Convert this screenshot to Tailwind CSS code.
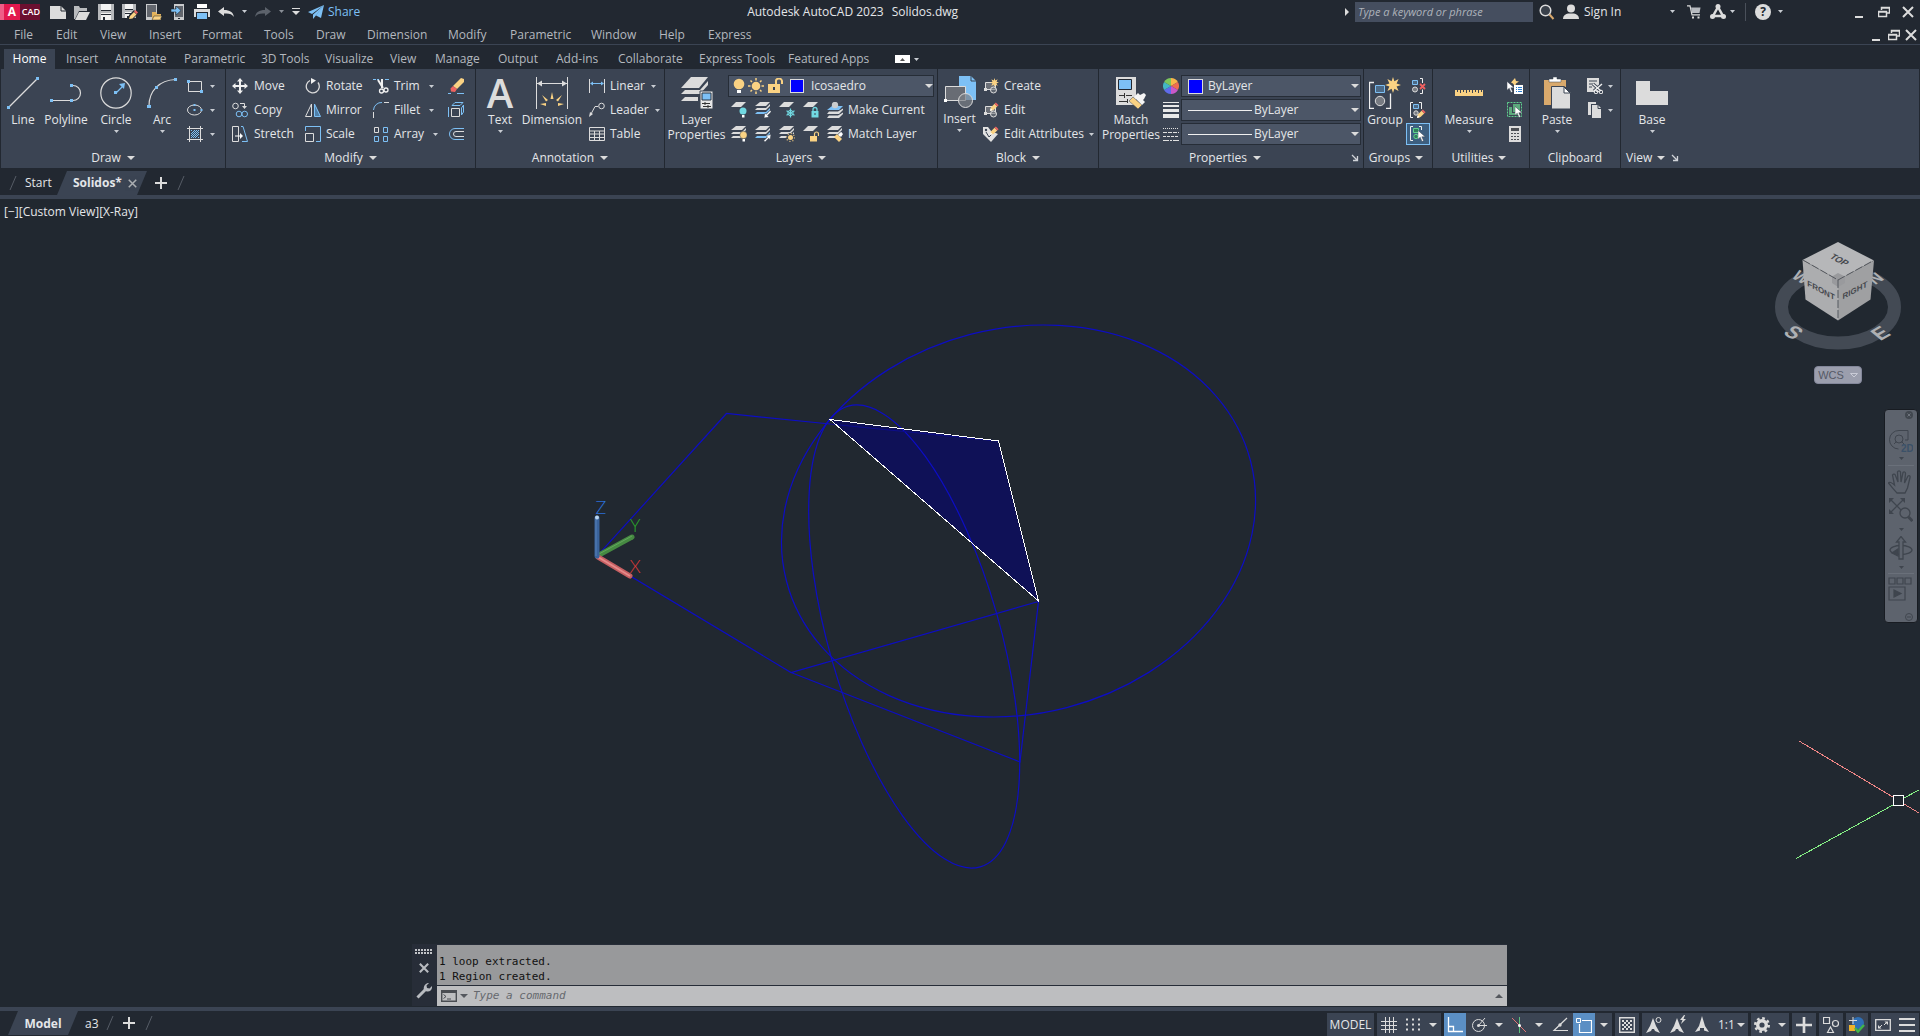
<!DOCTYPE html>
<html lang="en">
<head>
    <meta charset="UTF-8">
    <meta name="viewport" content="width=device-width, initial-scale=1.0">
    <title>Autodesk AutoCAD 2023 - Solidos.dwg</title>
    <script src="https://cdn.jsdelivr.net/npm/@tailwindcss/browser@4"></script>
</head>
<body class="flex h-screen flex-col overflow-hidden bg-[#222831] text-xs text-[#e4e6e9] [font-family:'Open_Sans',sans-serif]">

    <!-- Icon sprite -->
    <svg class="hidden">
        <symbol id="caret" viewBox="0 0 8 4" preserveAspectRatio="none"><path d="M0 0h8L4 4z"/></symbol>
        <symbol id="launch" viewBox="0 0 8 8"><path d="M1 1l5 5M6.500 2v4.500H2" fill="none" stroke="#d0d3d8" stroke-width="1.300"/></symbol>
        <symbol id="plus" viewBox="0 0 12 12"><path d="M6 0v12M0 6h12" stroke="#dcdcdc" stroke-width="2"/></symbol>
        <symbol id="close" viewBox="0 0 12 12"><path d="M1 1l10 10M11 1L1 11" stroke="#dcdcdc" stroke-width="2"/></symbol>
        <symbol id="restore" viewBox="0 0 12 12"><path d="M3.500 4V1.500h8V7H9M.5 5.500h8v5h-8zM3 2h9M0 6h9" fill="none" stroke="#dcdcdc" stroke-width="1.500"/></symbol>
        <symbol id="sheet" viewBox="0 0 16 16"><path d="M5 1h11l-5 6H0z" fill="#dcdcdc"/></symbol>
        <symbol id="sheets" viewBox="0 0 16 16"><path d="M5 0h10l-4 4H0z" fill="#dcdcdc"/><path d="M2 6h9l4-4v2l-4 4H0zM2 10h9l4-4v2l-4 4H0z" fill="#dcdcdc"/></symbol>
        <symbol id="sheetsblue" viewBox="0 0 16 16"><path d="M5 0h10l-4 4H0z" fill="#dcdcdc"/><path d="M2 6h9l4-4v2l-4 4H0z" fill="#dcdcdc"/><path d="M2 10h9l4-4v2l-4 4H0z" fill="#7dc0f5"/></symbol>
        <symbol id="pencil" viewBox="0 0 10 10"><path d="M0 10l1-4 4-4 3 3-4 4z" fill="#fad283"/><path d="M5 2l1.500-1.500 3 3L8 5z" fill="#ee6461"/><path d="M0 10l.7-3L3 9.300z" fill="#fff"/></symbol>
        <symbol id="cursor" viewBox="0 0 10 14"><path d="M0 0v11l2.800-2.500L5 14l2-1-2.200-5H9z" fill="#fff" stroke="#3b4453" stroke-width=".6"/></symbol>
        <symbol id="burst" viewBox="0 0 16 16"><path d="M8 0l1.400 4.300L13.600 2l-2 4.500L16 8l-4.400 1.500 2 4.500-4.200-2.300L8 16l-1.400-4.300L2.400 14l2-4.500L0 8l4.400-1.500-2-4.500 4.200 2.300z" fill="#fad283"/></symbol>
        <symbol id="blockshape" viewBox="0 0 16 16"><path d="M2.500 4.500h10v7h-10z" fill="#6c7078" stroke="#dcdcdc"/><circle cx="10.500" cy="12" r="3" fill="#777b82" fill-opacity=".6" stroke="#dcdcdc"/><path d="M1 10h3v3H1z" fill="#dcdcdc"/></symbol>

        <symbol id="new" viewBox="0 0 16 16"><path d="M0 2h11l5 5v8H0z" fill="#dcdcdc"/><path d="M11 2v5h5" fill="none" stroke="#222831"/></symbol>
        <symbol id="open" viewBox="0 0 16 16"><path d="M0 2h5l1 2h7v3H5L1 15H0z" fill="#b9bbbe"/><path d="M5 8h11l-4 8H1z" fill="#dcdcdc"/></symbol>
        <symbol id="save" viewBox="0 0 16 16"><path d="M0 0h16v16H0z" fill="#b6b8bb"/><path d="M3 0h10v6H3zM3 9h10v7H3z" fill="#f2f2f2"/><path d="M3 6h10v1H3zM3 10h10v1H3zM5 13h2v3H5z" fill="#222831"/></symbol>
        <symbol id="saveas" viewBox="0 0 16 16"><path d="M0 0h14v14H0z" fill="#b6b8bb"/><path d="M3 0h8v5H3zM3 8h8v6H3z" fill="#f2f2f2"/><path d="M3 5h8v1H3zM3 9h8v1H3zM5 12h2v2H5z" fill="#222831"/><path d="M6 16l1-5 5-5 4 4-5 5z" fill="#222831"/><path d="M7 15l1-3 4-4 2.500 2.500-4 4z" fill="#fad283"/><path d="M12 7.500L13.500 6 16 8.500 14.500 10z" fill="#ee6461"/></symbol>
        <symbol id="openweb" viewBox="0 0 16 16"><path d="M0 0h11v16H0z" fill="#c9cbcd"/><path d="M1 1h9v12H1z" fill="#62666d"/><path d="M6 8h4l1 2h4v6H6z" fill="#e3b35c"/><path d="M8 12h8l-2 4H6z" fill="#fad283" stroke="#222831" stroke-width=".5"/></symbol>
        <symbol id="saveweb" viewBox="0 0 16 16"><path d="M4 0h10v16H4z" fill="#c9cbcd"/><path d="M5 2h8v11H5z" fill="#62666d"/><path d="M1 5h5V2l5 4.500L6 11V8H1z" fill="#7dc0f5" stroke="#222831" stroke-width=".6"/><path d="M8 14h2v1H8z" fill="#222831"/></symbol>
        <symbol id="print" viewBox="0 0 16 16"><path d="M3 0h10v4H3z" fill="#fff"/><path d="M0 5h16v8H0z" fill="#dcdcdc"/><path d="M2 8h12v8H2z" fill="#222831"/><path d="M3 9h10v6H3z" fill="#7dc0f5"/></symbol>
        <symbol id="undo" viewBox="0 0 16 10"><path d="M0 4.500L6 0v3c6 0 9 2 10 7-2-3-5-4-10-3.500V9z"/></symbol>
        <symbol id="send" viewBox="0 0 16 14"><path d="M16 0L0 7l4 2zM16 0L5 9.500V14l2.500-3zM16 0L8 10.500l5 2.500z" fill="#7dc0f5"/></symbol>

        <symbol id="line" viewBox="0 0 32 32"><path d="M2 30L30 2" stroke="#dcdcdc" stroke-width="1.200"/><path d="M0 29h3v3H0zM29 0h3v3h-3z" fill="#7dc0f5"/></symbol>
        <symbol id="polyline" viewBox="0 0 32 32"><path d="M3 23.500h17M22 8.500h1a7.500 7.500 0 0 1 0 15h-2" fill="none" stroke="#dcdcdc" stroke-width="1.200"/><path d="M0 22h3v3H0zM20 22h3v3h-3zM20 7h3v3h-3z" fill="#7dc0f5"/></symbol>
        <symbol id="circle" viewBox="0 0 32 32"><circle cx="16" cy="16" r="15.200" fill="none" stroke="#dcdcdc" stroke-width="1.200"/><path d="M16 16l7-7" stroke="#7dc0f5" stroke-width="1.300"/><path d="M25 6l-1 6-5-5zM14 14h3v3h-3z" fill="#7dc0f5"/></symbol>
        <symbol id="arc" viewBox="0 0 32 32"><path d="M3 29C3 14 13 3 30 2.500" fill="none" stroke="#dcdcdc" stroke-width="1.200"/><path d="M1 28h4v3H1zM9 9h3v3H9zM28 1h3v3h-3z" fill="#7dc0f5"/></symbol>
        <symbol id="rect" viewBox="0 0 16 16"><path d="M1.500 3.500h13v10h-13z" fill="none" stroke="#dcdcdc"/><path d="M0 2h3v3H0zM13 12h3v3h-3z" fill="#7dc0f5"/></symbol>
        <symbol id="ellipse" viewBox="0 0 16 16"><ellipse cx="7.500" cy="8" rx="7" ry="5" fill="none" stroke="#dcdcdc"/><path d="M6.500 2h2v2h-2zM6.500 7h2v2h-2zM13.500 7h2v2h-2z" fill="#7dc0f5"/></symbol>
        <symbol id="hatch" viewBox="0 0 16 16"><path d="M2.500 0v16M13.500 0v16M0 2.500h16M0 13.500h16" stroke="#dcdcdc"/><path d="M4 8l4-4M4 12l8-8M8 12l4-4M4 5l1-1M11 12l1-1M4 10l6-6M6 12l6-6" stroke="#7dc0f5"/></symbol>

        <symbol id="move" viewBox="0 0 16 16"><path d="M8 0l3 3.500H9V7h3.500V5L16 8l-3.500 3V9H9v3.500h2L8 16l-3-3.500h2V9H3.500v2L0 8l3.500-3v2H7V3.500H5z" fill="#f0f0f0"/></symbol>
        <symbol id="copy" viewBox="0 0 16 16"><circle cx="3.500" cy="4" r="2.800" fill="none" stroke="#dcdcdc"/><path d="M8 1.500h4.500V5" fill="none" stroke="#dcdcdc"/><path d="M10 4h5l-2.500 3z" fill="#dcdcdc"/><circle cx="7" cy="12" r="2.800" fill="none" stroke="#7dc0f5"/><circle cx="12.700" cy="12" r="2.800" fill="none" stroke="#7dc0f5"/></symbol>
        <symbol id="stretch" viewBox="0 0 16 16"><path d="M.5.500h6v15h-6z" fill="none" stroke="#dcdcdc"/><path d="M9 .5h2l4.500 15H10" fill="none" stroke="#7dc0f5"/><path d="M3 10h5" stroke="#fff"/><path d="M8 7l3 3-3 3z" fill="#fff"/></symbol>
        <symbol id="rotate" viewBox="0 0 16 16"><path d="M5 2.500a6.500 6.500 0 1 0 8 2" fill="none" stroke="#dcdcdc" stroke-width="1.300"/><path d="M6 0l5 2.500L6 6z" fill="#f0f0f0"/></symbol>
        <symbol id="mirror" viewBox="0 0 16 16"><path d="M6.500 2v12.500h-6z" fill="none" stroke="#dcdcdc"/><path d="M9.500 2v12.500h6z" fill="#4f7fa8" stroke="#7dc0f5"/></symbol>
        <symbol id="scale" viewBox="0 0 16 16"><path d="M.5 5V.500h15v15H11" fill="none" stroke="#7dc0f5"/><path d="M.5 7.500h8v8h-8z" fill="none" stroke="#dcdcdc"/></symbol>
        <symbol id="trim" viewBox="0 0 16 16"><path d="M0 1.500h3M4 1.500h2M12 1.500h4" stroke="#7dc0f5"/><path d="M5 2l5 8M9 1v9" stroke="#f0f0f0" stroke-width="2"/><circle cx="8.500" cy="13" r="2" fill="none" stroke="#f0f0f0" stroke-width="1.300"/><circle cx="13" cy="12" r="2" fill="none" stroke="#f0f0f0" stroke-width="1.300"/></symbol>
        <symbol id="fillet" viewBox="0 0 16 16"><path d="M.5 16v-6M11 .500h5" stroke="#dcdcdc"/><path d="M.5 8A8 8 0 0 1 9 .500" fill="none" stroke="#7dc0f5"/></symbol>
        <symbol id="array" viewBox="0 0 16 16"><path d="M1.500 1.500h4v5h-4z" fill="none" stroke="#dcdcdc"/><path d="M10.500 1.500h4v5h-4zM1.500 10.500h4v5h-4zM10.500 10.500h4v5h-4z" fill="none" stroke="#7dc0f5"/></symbol>
        <symbol id="erase" viewBox="0 0 16 16"><path d="M5 8l8-8 3 1v3l-7 7z" fill="#fad283"/><path d="M5 8l4 3-2 3-4-.5-.5-3z" fill="#ee6461"/><path d="M0 15.500h3M9 15.500h7" stroke="#7dc0f5"/></symbol>
        <symbol id="explode" viewBox="0 0 16 16"><path d="M3.500 6.500h8v8h-8z" fill="none" stroke="#dcdcdc"/><path d="M.5 5v10M4 3.500L7 .500h8L12 3.500zM13.500 6l2-3v7l-2 3z" fill="none" stroke="#7dc0f5"/></symbol>
        <symbol id="offset" viewBox="0 0 16 16"><path d="M16 2.500H7a5.500 5.500 0 0 0 0 11h9" fill="none" stroke="#7dc0f5"/><path d="M16 5.500H8a2.500 2.500 0 0 0 0 5h8" fill="none" stroke="#dcdcdc"/></symbol>

        <symbol id="dimension" viewBox="0 0 32 32"><path d="M.5 0v32M31.500 0v32M1 6.500h30" stroke="#dcdcdc"/><path d="M1 6.500l5-3v6zM31 6.500l-5-3v6z" fill="#dcdcdc"/><path d="M16 15l1.500 7h-3zM6 18l6 5-2 1.500zM26 18l-6 5 2 1.500zM4 27l6-1v3zM28 27l-6-1v3z" fill="#fad283"/></symbol>
        <symbol id="linear" viewBox="0 0 16 16"><path d="M.5 1v14M15.500 1v14" stroke="#dcdcdc"/><path d="M2 5.500h12" stroke="#7dc0f5"/><path d="M1 5.500l3-2v4zM15 5.500l-3-2v4z" fill="#7dc0f5"/></symbol>
        <symbol id="leader" viewBox="0 0 16 16"><circle cx="12.500" cy="4" r="2.800" fill="none" stroke="#dcdcdc"/><path d="M9 4.500H6L2 12" fill="none" stroke="#dcdcdc"/><path d="M0 15l1-5 3 2z" fill="#dcdcdc"/></symbol>
        <symbol id="table" viewBox="0 0 16 16"><path d="M.5 1.500h15v13H.500zM0 5h16M0 8h16M0 11.500h16M5.500 5v9M10.500 5v9" fill="none" stroke="#dcdcdc"/></symbol>

        <symbol id="layerprops" viewBox="0 0 32 32"><path d="M10 0h17l-9 11H0z" fill="#dcdcdc"/><path d="M4 13h15l8-9v4l-8 9H0zM4 20h13v4H0z" fill="#dcdcdc"/><path d="M19 14h13v18H19z" fill="#e6e6e6" stroke="#3b4453"/><path d="M21 16h9v7h-9z" fill="#7dc0f5" stroke="#2a3440"/><path d="M21 26.500h8M22 29.500h8M24 25v3M27 28v3" stroke="#333"/></symbol>
        <symbol id="bulb" viewBox="0 0 12 16"><circle cx="6" cy="6" r="5.300" fill="#fad283"/><path d="M4 12h4v3H4z" fill="#fff"/></symbol>
        <symbol id="sun" viewBox="0 0 16 16"><circle cx="8" cy="8" r="4.300" fill="#fad283"/><path d="M8 0v2.500M8 13.500V16M0 8h2.500M13.500 8H16M2.500 2.500L4 4M12 12l1.500 1.500M13.500 2.500L12 4M4 12l-1.500 1.500" stroke="#fad283" stroke-width="1.500"/></symbol>
        <symbol id="unlock" viewBox="0 0 16 16"><path d="M9 7V4a3 3 0 0 1 6-1v3" fill="none" stroke="#fad283" stroke-width="2"/><path d="M1 6h12v9H1z" fill="#fad283"/><path d="M6 9h2v3H6z" fill="#3b4453"/></symbol>
        <symbol id="l-off" viewBox="0 0 16 16"><path d="M5 0h10l-5 5H0z" fill="#dcdcdc"/><circle cx="12" cy="9" r="3.500" fill="#71d9e2"/><path d="M11 13h2.500v2.500H11z" fill="#fff"/></symbol>
        <symbol id="l-iso" viewBox="0 0 16 16"><use href="#sheetsblue"/><path d="M9 16l1-5 1.300 1.300L15 8.500l1.200 1.200-3.700 3.700L14 15z" fill="#fff" stroke="#3b4453" stroke-width=".5"/></symbol>
        <symbol id="l-frz" viewBox="0 0 16 16"><path d="M5 0h10l-5 5H0z" fill="#dcdcdc"/><path d="M11.500 6.500v9M7.500 8.800l8 4.400M15.500 8.800l-8 4.400" stroke="#71d9e2" stroke-width="1.200"/><circle cx="11.500" cy="11" r="2.700" fill="none" stroke="#71d9e2"/></symbol>
        <symbol id="l-lock" viewBox="0 0 16 16"><path d="M5 0h10l-5 5H0z" fill="#dcdcdc"/><path d="M8.500 9h7v6.500h-7z" fill="#71d9e2"/><path d="M10 9V7.500a2 2 0 0 1 4 0V9" fill="none" stroke="#71d9e2" stroke-width="1.300"/><path d="M11.500 11h1v2h-1z" fill="#3b4453"/></symbol>
        <symbol id="l-cur" viewBox="0 0 16 16"><path d="M5 4h11l-4 4H0z" fill="#7dc0f5"/><path d="M2 9.500h9l5-3v1.500l-4 4H0zM2 13.500h9l5-3V12l-4 4H0z" fill="#dcdcdc"/><circle cx="8" cy="3" r="3.200" fill="#c9cbcd"/></symbol>
        <symbol id="l-on" viewBox="0 0 16 16"><use href="#sheets"/><circle cx="12.500" cy="9" r="3.700" fill="#fad283" stroke="#3b4453" stroke-width=".5"/><path d="M11.500 13H14v2.500h-2.500z" fill="#fff"/></symbol>
        <symbol id="l-uniso" viewBox="0 0 16 16"><use href="#sheetsblue"/><path d="M16 8.500l-1 5-1.300-1.300L10 16l-1.200-1.200L12.500 11 11 9.500z" fill="#fff" stroke="#3b4453" stroke-width=".5"/></symbol>
        <symbol id="l-thaw" viewBox="0 0 16 16"><use href="#sheets"/><circle cx="11.500" cy="11.500" r="4.600" fill="#3b4453"/><circle cx="11.500" cy="11.500" r="2.500" fill="#fad283"/><circle cx="11.500" cy="11.500" r="4" fill="none" stroke="#fad283" stroke-width="1.200" stroke-dasharray="1 2.100"/></symbol>
        <symbol id="l-unlock" viewBox="0 0 16 16"><path d="M5 0h10l-5 5H0z" fill="#dcdcdc"/><path d="M7 10h7v5.500H7z" fill="#fad283"/><path d="M11.500 10V8a2 2 0 0 1 4 0v2" fill="none" stroke="#fad283" stroke-width="1.200"/></symbol>
        <symbol id="l-match" viewBox="0 0 16 16"><use href="#sheets"/><path d="M7 11l3-3 5 5-3 3z" fill="#fad283"/><path d="M11 8.500L14 6l2 2-2 3z" fill="#fff"/></symbol>

        <symbol id="insert" viewBox="0 0 32 32"><path d="M15 0h12l5 5v19H15z" fill="#7dc0f5"/><path d="M27 0v5h5" fill="none" stroke="#3b4453"/><path d="M1.500 10.500h20v14h-20z" fill="#686c74" stroke="#dcdcdc"/><circle cx="21.500" cy="24.500" r="7" fill="#7c8087" fill-opacity=".7" stroke="#dcdcdc"/><path d="M0 23h3v3H0z" fill="#fff"/></symbol>
        <symbol id="b-create" viewBox="0 0 16 16"><use href="#blockshape"/><use href="#burst" x="7" y="0" width="9" height="9"/></symbol>
        <symbol id="b-edit" viewBox="0 0 16 16"><use href="#blockshape"/><use href="#pencil" x="7" y="0" width="9" height="9"/></symbol>
        <symbol id="b-attr" viewBox="0 0 16 16"><path d="M0 1h5l3 4 7 3-7 8-8-8z" fill="#e2e2e2"/><path d="M3 6l3 5 4-4" fill="none" stroke="#3b4453"/><circle cx="3" cy="4" r="1.200" fill="#3b4453"/><use href="#pencil" x="7" y="0" width="9" height="9"/></symbol>

        <symbol id="matchprops" viewBox="0 0 32 32"><path d="M1 0h20v28H1z" fill="#dcdcdc"/><path d="M3.500 2.500h13v10h-13z" fill="#7dc0f5" stroke="#222831"/><path d="M4 18.500h5M11 18.500h6M9.500 16v5M4 24.500h9M12.500 22v4" stroke="#333"/><path d="M14 24l4-4 9 8-4 4z" fill="#fad283" stroke="#3b4453" stroke-width=".5"/><path d="M19 20l4-4 2 2 4-2 2 2-2 4-1 1 2 2-3 3z" fill="#f5f5f5"/></symbol>
        <symbol id="wheel" viewBox="0 0 16 16"><path d="M8 8V0a8 8 0 0 1 6.900 4z" fill="#f7b64a"/><path d="M8 8l6.900-4a8 8 0 0 1 0 8z" fill="#ee6d50"/><path d="M8 8l6.900 4A8 8 0 0 1 8 16z" fill="#c958c9"/><path d="M8 8v8a8 8 0 0 1-6.900-4z" fill="#5f6bea"/><path d="M8 8l-6.900 4a8 8 0 0 1 0-8z" fill="#43b8c4"/><path d="M8 8L1.100 4A8 8 0 0 1 8 0z" fill="#7cc75c"/></symbol>
        <symbol id="weights" viewBox="0 0 16 16"><path d="M0 0h16v1H0zM0 3h16v2H0zM0 7h16v3H0zM0 12h16v4H0z" fill="#e8e8e8"/></symbol>
        <symbol id="ltypes" viewBox="0 0 16 16"><path d="M0 2.500h16" stroke="#e0e0e0" stroke-dasharray="1 1"/><path d="M0 6.500h16" stroke="#e0e0e0" stroke-dasharray="4 1"/><path d="M0 10.500h16" stroke="#e0e0e0" stroke-dasharray="3 1"/><path d="M0 14.500h16" stroke="#e0e0e0" stroke-dasharray="6 1 2 1"/></symbol>

        <symbol id="group" viewBox="0 0 32 32"><path d="M5 5.500H.5v26H5M17 31.500h4.500v-15" fill="none" stroke="#f0f0f0" stroke-width="1.300"/><path d="M6.500 8.500h9v7h-9z" fill="#4d6a86" stroke="#7dc0f5"/><circle cx="11" cy="24" r="4.700" fill="#777b82" stroke="#dcdcdc"/><use href="#burst" x="16" y="0" width="16" height="16"/></symbol>
        <symbol id="ungroup" viewBox="0 0 16 16"><path d="M10 .500h2.500V5M10 15.500h2.500v-4" fill="none" stroke="#f0f0f0"/><path d="M2.500 2.500h5v4h-5z" fill="#4d6a86" stroke="#7dc0f5"/><circle cx="5" cy="11.500" r="2.500" fill="#777b82" stroke="#dcdcdc"/><path d="M10 6l5 5M15 6l-5 5" stroke="#f06060" stroke-width="1.800"/></symbol>
        <symbol id="groupedit" viewBox="0 0 16 16"><path d="M3 .500H.5v15H3M9 .500h2.500V7" fill="none" stroke="#f0f0f0"/><path d="M3.500 2.500h5v4h-5z" fill="#4d6a86" stroke="#7dc0f5"/><circle cx="6" cy="11" r="2.200" fill="#777b82" stroke="#dcdcdc"/><use href="#pencil" x="7" y="7" width="9" height="9"/></symbol>
        <symbol id="groupsel" viewBox="0 0 16 16"><path d="M3 .500H.5v14H3M9 .500h2.500V4" fill="none" stroke="#f0f0f0"/><path d="M3.500 2.500h5v4h-5z" fill="#2f7f5c" stroke="#5fd08e"/><circle cx="6" cy="10.500" r="2.200" fill="#2f7f5c" stroke="#5fd08e"/><use href="#cursor" x="8" y="4" width="8" height="12"/></symbol>

        <symbol id="measure" viewBox="0 0 32 32"><path d="M2 13h28v6H2z" fill="#fad283"/><path d="M4.500 13v2M7.500 13v3M10.500 13v2M13.500 13v3M16.500 13v2M19.500 13v3M22.500 13v2M25.500 13v3M28.500 13v2" stroke="#3b4453"/></symbol>
        <symbol id="quickselect" viewBox="0 0 16 16"><path d="M8 0l1 3 3 .5-3 2-1 3-2-3-2-1z" fill="#fad283"/><use href="#cursor" x="0" y="3" width="8" height="12"/><path d="M7 7h9v9H7z" fill="#fff"/><path d="M9 9.500h1M9 11.500h1M9 13.500h1M11 9.500h4M11 11.500h4M11 13.500h4" stroke="#2d7fd0"/></symbol>
        <symbol id="selectall" viewBox="0 0 16 16"><path d="M.5.500h14v14H.500z" fill="none" stroke="#5fd08e" stroke-dasharray="2 1"/><path d="M2 5h3v6h6v2H2zM6 2h7v8H6z" fill="#5ca97c"/><use href="#cursor" x="8" y="4" width="8" height="12"/></symbol>
        <symbol id="calc" viewBox="0 0 16 16"><path d="M2 0h12v16H2z" fill="#dcdcdc"/><path d="M4 2h8v3H4zM4 7h2v1H4zM7 7h2v1H7zM10 7h2v1h-2zM4 10h2v1H4zM7 10h2v1H7zM10 10h2v1h-2zM4 13h2v1H4zM7 13h2v1H7zM10 13h2v1h-2z" fill="#4c4f55"/></symbol>
        <symbol id="paste" viewBox="0 0 32 32"><path d="M3 3h22v25H3z" fill="#d9a96c"/><path d="M8 2h4V0h4v2h4v3H8z" fill="#fff" stroke="#3b4453" stroke-width=".5"/><path d="M10.500 9.500h13l6 6V32h-19z" fill="#dcdcdc" stroke="#3b4453"/><path d="M23 10v6h6z" fill="#fff" stroke="#3b4453"/></symbol>
        <symbol id="cut" viewBox="0 0 16 16"><path d="M0 0h12v14H0z" fill="#dcdcdc"/><path d="M2 3h8M2 6h4M2 9h3" stroke="#3b4453"/><path d="M6 6l8 7M15 6l-8 7" stroke="#3b4453" stroke-width="3"/><path d="M6 6l8 7M15 6l-8 7" stroke="#f0f0f0" stroke-width="1.400"/><circle cx="9" cy="14" r="1.800" fill="none" stroke="#f0f0f0"/><circle cx="14" cy="14" r="1.800" fill="none" stroke="#f0f0f0"/></symbol>
        <symbol id="copyclip" viewBox="0 0 16 16"><path d="M1 0h8v2H4v11H1z" fill="#dcdcdc"/><path d="M5 3h6l3 3v10H5z" fill="#dcdcdc"/><path d="M11 3v3.500h3" fill="none" stroke="#3b4453"/></symbol>
        <symbol id="base" viewBox="0 0 32 32"><path d="M0 4h14v10h18v14H0z" fill="#dcdcdc"/></symbol>

        <symbol id="north" viewBox="0 0 16 20"><path d="M8 1l3 10 4 6-5-1.500V13H6v2.500L1 17l4-6z" fill="#dcdcdc"/></symbol>
    </svg>

    <!-- Title bar -->
    <header class="flex h-[22px] shrink-0 items-center pt-px">
        <div class="flex h-4 w-10 shrink-0 items-center bg-[#6b1030] text-[9px] font-semibold text-white">
            <span class="flex h-4 w-5 items-center justify-center border-l-4 border-[#ef5d87] bg-[#e2184e] text-xs font-bold">A</span>
            <span class="pl-[2px]">CAD</span>
        </div>
        <div class="flex items-center gap-2 pl-[10px]">
            <button aria-label="New"><svg class="size-4"><use href="#new"/></svg></button>
            <button aria-label="Open"><svg class="size-4"><use href="#open"/></svg></button>
            <button aria-label="Save"><svg class="size-4"><use href="#save"/></svg></button>
            <button aria-label="Save As"><svg class="size-4"><use href="#saveas"/></svg></button>
            <button aria-label="Open from Web"><svg class="size-4"><use href="#openweb"/></svg></button>
            <button aria-label="Save to Web"><svg class="size-4"><use href="#saveweb"/></svg></button>
            <button aria-label="Plot"><svg class="size-4"><use href="#print"/></svg></button>
            <button aria-label="Undo"><svg class="h-[10px] w-4 fill-[#dcdcdc]"><use href="#undo"/></svg></button>
            <button aria-label="Undo list"><svg class="h-[3px] w-[5px] fill-[#c9cdd3]"><use href="#caret"/></svg></button>
            <button aria-label="Redo" class="-scale-x-100"><svg class="h-[10px] w-4 fill-[#5c626b]"><use href="#undo"/></svg></button>
            <button aria-label="Redo list"><svg class="h-[3px] w-[5px] fill-[#8a8f97]"><use href="#caret"/></svg></button>
            <button aria-label="Customize" class="flex flex-col gap-[2px]"><span class="h-px w-2 bg-[#dcdcdc]"></span><svg class="h-1 w-2 fill-[#dcdcdc]"><use href="#caret"/></svg></button>
            <button class="flex items-center gap-1 text-[#7dc0f5]"><svg class="h-[14px] w-4"><use href="#send"/></svg>Share</button>
        </div>
        <h1 class="flex flex-1 justify-center gap-2 whitespace-nowrap"><span>Autodesk AutoCAD 2023</span><span>Solidos.dwg</span></h1>
        <div class="flex items-center">
            <svg class="mr-[6px] h-2 w-1 fill-[#dcdcdc]" viewBox="0 0 4 8"><path d="M0 0l4 4-4 4z"/></svg>
            <input type="text" aria-label="Search" placeholder="Type a keyword or phrase" class="h-5 w-[178px] bg-[#454e5f] px-[3px] text-[11px] italic placeholder:text-[#aeb3bb]">
            <button aria-label="Find" class="ml-[6px]"><svg class="size-4" viewBox="0 0 16 16"><circle cx="6.500" cy="6.500" r="5.300" fill="#3a414b" stroke="#dcdcdc" stroke-width="1.500"/><path d="M10.500 10.500l4 4.500" stroke="#d9a96c" stroke-width="2"/></svg></button>
            <button class="ml-2 flex w-[101px] items-center gap-[5px] whitespace-nowrap"><svg class="size-4" viewBox="0 0 16 16"><circle cx="8" cy="4.500" r="4" fill="#dcdcdc"/><path d="M0 15c0-4 3-5 5-5.500h6c2 .5 5 1.500 5 5.500z" fill="#dcdcdc"/></svg>Sign In</button>
            <button aria-label="Account menu" class="ml-[6px]"><svg class="h-[3px] w-[5px] fill-[#c9cdd3]"><use href="#caret"/></svg></button>
            <button aria-label="App Store" class="ml-3"><svg class="size-[14px]" viewBox="0 0 14 14"><path d="M0 .800h3l2 9h8" fill="none" stroke="#dcdcdc" stroke-width="1.200"/><path d="M4 2.500h9.500l-1 5.500H5z" fill="#b7babf"/><path d="M5 11.500h2v2H5zM10.500 11.500h2v2h-2z" fill="#dcdcdc"/></svg></button>
            <button aria-label="Stay connected" class="ml-[9px]"><svg class="size-4" viewBox="0 0 16 16"><path d="M8 3L3 12h10z" fill="none" stroke="#dcdcdc" stroke-width="2.500"/><circle cx="8" cy="2.500" r="2.500" fill="#dcdcdc"/><circle cx="2.500" cy="12.500" r="2.500" fill="#dcdcdc"/><circle cx="13.500" cy="12.500" r="2.500" fill="#dcdcdc"/></svg></button>
            <button aria-label="Connect menu" class="ml-1"><svg class="h-[3px] w-[5px] fill-[#c9cdd3]"><use href="#caret"/></svg></button>
            <span class="ml-[10px] h-[18px] w-px bg-[#4a505a]"></span>
            <button aria-label="Help" class="ml-[9px] flex size-4 items-center justify-center rounded-full bg-[#dcdcdc] font-bold text-[#222831]">?</button>
            <button aria-label="Help menu" class="ml-[7px]"><svg class="h-[3px] w-[5px] fill-[#c9cdd3]"><use href="#caret"/></svg></button>
            <button aria-label="Minimize" class="ml-[72px] flex h-3 w-2 items-end"><span class="h-[2px] w-2 bg-[#dcdcdc]"></span></button>
            <button aria-label="Restore" class="ml-[15px]"><svg class="size-3"><use href="#restore"/></svg></button>
            <button aria-label="Close" class="mr-[6px] ml-3"><svg class="size-3"><use href="#close"/></svg></button>
        </div>
    </header>

    <!-- Menu bar -->
    <div class="flex h-[23px] shrink-0 items-center justify-between border-b border-[#3b4453] pt-[3px] pr-[3px] pl-[14px] text-[#b4b8bf]">
        <nav class="grid grid-cols-[42px_44px_49px_53px_62px_52px_51px_81px_62px_81px_68px_49px_60px] text-left">
            <button class="text-left">File</button>
            <button class="text-left">Edit</button>
            <button class="text-left">View</button>
            <button class="text-left">Insert</button>
            <button class="text-left">Format</button>
            <button class="text-left">Tools</button>
            <button class="text-left">Draw</button>
            <button class="text-left">Dimension</button>
            <button class="text-left">Modify</button>
            <button class="text-left">Parametric</button>
            <button class="text-left">Window</button>
            <button class="text-left">Help</button>
            <button class="text-left">Express</button>
        </nav>
        <div class="flex items-center">
            <button aria-label="Minimize drawing" class="flex h-3 w-2 items-end"><span class="h-[2px] w-2 bg-[#dcdcdc]"></span></button>
            <button aria-label="Restore drawing" class="ml-2"><svg class="size-3"><use href="#restore"/></svg></button>
            <button aria-label="Close drawing" class="ml-[5px]"><svg class="size-3"><use href="#close"/></svg></button>
        </div>
    </div>

    <!-- Ribbon tabs -->
    <nav class="mt-1 grid h-5 shrink-0 grid-cols-[51px_49px_69px_77px_64px_65px_45px_63px_58px_62px_81px_89px_98px_60px] items-stretch justify-start pl-1 whitespace-nowrap text-[#b4b8bf]">
        <button class="bg-[#3b4453] text-white">Home</button>
        <button class="pl-[11px] text-left">Insert</button>
        <button class="pl-[11px] text-left">Annotate</button>
        <button class="pl-[11px] text-left">Parametric</button>
        <button class="pl-[11px] text-left">3D Tools</button>
        <button class="pl-[11px] text-left">Visualize</button>
        <button class="pl-[11px] text-left">View</button>
        <button class="pl-[11px] text-left">Manage</button>
        <button class="pl-[11px] text-left">Output</button>
        <button class="pl-[11px] text-left">Add-ins</button>
        <button class="pl-[11px] text-left">Collaborate</button>
        <button class="pl-[11px] text-left">Express Tools</button>
        <button class="pl-[11px] text-left">Featured Apps</button>
        <button aria-label="Minimize ribbon" class="flex items-center gap-1 pl-5"><span class="flex h-2 w-[15px] items-center justify-center bg-white"><svg class="h-[3px] w-[5px] rotate-180 fill-[#555]"><use href="#caret"/></svg></span><svg class="h-[3px] w-[5px] fill-[#c9cdd3]"><use href="#caret"/></svg></button>
    </nav>

    <!-- Ribbon -->
    <div class="mx-px flex h-[99px] shrink-0 bg-[#3b4453] whitespace-nowrap">
        <section class="flex w-[225px] shrink-0 flex-col border-r border-[#222831] pt-[5px]">
            <div class="flex h-[72px]">
                <button class="flex w-11 flex-col items-center gap-[3px] pt-[3px] leading-[15px]"><svg class="size-8 shrink-0"><use href="#line"/></svg><span>Line</span></button>
                <button class="flex w-[42px] flex-col items-center gap-[3px] pt-[3px] leading-[15px]"><svg class="size-8 shrink-0"><use href="#polyline"/></svg><span>Polyline</span></button>
                <button class="flex w-[58px] flex-col items-center gap-[3px] pt-[3px] leading-[15px]"><svg class="size-8 shrink-0"><use href="#circle"/></svg><span>Circle</span><svg class="h-[3px] w-[5px] fill-[#c9cdd3]"><use href="#caret"/></svg></button>
                <button class="flex w-[34px] flex-col items-center gap-[3px] pt-[3px] leading-[15px]"><svg class="size-8 shrink-0"><use href="#arc"/></svg><span>Arc</span><svg class="h-[3px] w-[5px] fill-[#c9cdd3]"><use href="#caret"/></svg></button>
                <div class="grid grid-rows-3 pl-2">
                    <button aria-label="Rectangle" class="flex items-center gap-[7px]"><svg class="size-4"><use href="#rect"/></svg><svg class="h-[3px] w-[5px] fill-[#c9cdd3]"><use href="#caret"/></svg></button>
                    <button aria-label="Ellipse" class="flex items-center gap-[7px]"><svg class="size-4"><use href="#ellipse"/></svg><svg class="h-[3px] w-[5px] fill-[#c9cdd3]"><use href="#caret"/></svg></button>
                    <button aria-label="Hatch" class="flex items-center gap-[7px]"><svg class="size-4"><use href="#hatch"/></svg><svg class="h-[3px] w-[5px] fill-[#c9cdd3]"><use href="#caret"/></svg></button>
                </div>
            </div>
            <button class="flex h-[22px] items-center justify-center gap-[6px] pt-[2px]">Draw<svg class="h-1 w-2 fill-[#dcdcdc]"><use href="#caret"/></svg></button>
        </section>

        <section class="flex w-[250px] shrink-0 flex-col border-r border-[#222831] pt-[5px]">
            <div class="grid h-[72px] grid-cols-[73px_68px_75px_20px] grid-rows-3 pl-[6px]">
                <button class="flex items-center gap-[6px]"><svg class="size-4"><use href="#move"/></svg>Move</button>
                <button class="flex items-center gap-[5px]"><svg class="size-4"><use href="#rotate"/></svg>Rotate</button>
                <button class="flex items-center gap-[5px]"><svg class="size-4"><use href="#trim"/></svg>Trim<svg class="ml-1 h-[3px] w-[5px] fill-[#c9cdd3]"><use href="#caret"/></svg></button>
                <button aria-label="Erase"><svg class="size-4"><use href="#erase"/></svg></button>
                <button class="flex items-center gap-[6px]"><svg class="size-4"><use href="#copy"/></svg>Copy</button>
                <button class="flex items-center gap-[5px]"><svg class="size-4"><use href="#mirror"/></svg>Mirror</button>
                <button class="flex items-center gap-[5px]"><svg class="size-4"><use href="#fillet"/></svg>Fillet<svg class="ml-1 h-[3px] w-[5px] fill-[#c9cdd3]"><use href="#caret"/></svg></button>
                <button aria-label="Explode"><svg class="size-4"><use href="#explode"/></svg></button>
                <button class="flex items-center gap-[6px]"><svg class="size-4"><use href="#stretch"/></svg>Stretch</button>
                <button class="flex items-center gap-[5px]"><svg class="size-4"><use href="#scale"/></svg>Scale</button>
                <button class="flex items-center gap-[5px]"><svg class="size-4"><use href="#array"/></svg>Array<svg class="ml-1 h-[3px] w-[5px] fill-[#c9cdd3]"><use href="#caret"/></svg></button>
                <button aria-label="Offset"><svg class="size-4"><use href="#offset"/></svg></button>
            </div>
            <button class="flex h-[22px] items-center justify-center gap-[6px] pt-[2px]">Modify<svg class="h-1 w-2 fill-[#dcdcdc]"><use href="#caret"/></svg></button>
        </section>

        <section class="flex w-[189px] shrink-0 flex-col border-r border-[#222831] pt-[5px]">
            <div class="flex h-[72px]">
                <button class="flex w-12 flex-col items-center gap-[3px] pt-[3px] leading-[15px]"><span class="h-8 text-[40px] leading-8 font-semibold text-[#dcdcdc]">A</span><span>Text</span><svg class="h-[3px] w-[5px] fill-[#c9cdd3]"><use href="#caret"/></svg></button>
                <button class="flex w-14 flex-col items-center gap-[3px] pt-[3px] leading-[15px]"><svg class="size-8 shrink-0"><use href="#dimension"/></svg><span>Dimension</span></button>
                <div class="grid grid-rows-3 pl-[9px]">
                    <button class="flex items-center gap-[5px]"><svg class="size-4"><use href="#linear"/></svg>Linear<svg class="ml-px h-[3px] w-[5px] fill-[#c9cdd3]"><use href="#caret"/></svg></button>
                    <button class="flex items-center gap-[5px]"><svg class="size-4"><use href="#leader"/></svg>Leader<svg class="ml-px h-[3px] w-[5px] fill-[#c9cdd3]"><use href="#caret"/></svg></button>
                    <button class="flex items-center gap-[5px]"><svg class="size-4"><use href="#table"/></svg>Table</button>
                </div>
            </div>
            <button class="flex h-[22px] items-center justify-center gap-[6px] pt-[2px]">Annotation<svg class="h-1 w-2 fill-[#dcdcdc]"><use href="#caret"/></svg></button>
        </section>

        <section class="flex w-[273px] shrink-0 flex-col border-r border-[#222831] pt-[5px]">
            <div class="flex h-[72px]">
                <button class="flex w-16 flex-col items-center gap-[3px] pt-[3px] leading-[15px]"><svg class="size-8 shrink-0"><use href="#layerprops"/></svg><span>Layer<br>Properties</span></button>
                <div class="grid grid-rows-3 pr-[3px]">
                    <div class="relative flex items-center">
                        <select aria-label="Layer" class="h-[22px] w-[206px] appearance-none border border-[#262d37] bg-[#4c5667] pl-[82px] text-[#e4e6e9]"><option>Icosaedro</option></select>
                        <div class="pointer-events-none absolute inset-y-0 left-[5px] flex items-center gap-[3px]">
                            <svg class="h-4 w-3"><use href="#bulb"/></svg>
                            <svg class="size-4"><use href="#sun"/></svg>
                            <svg class="mr-1 size-4"><use href="#unlock"/></svg>
                            <span class="size-[14px] border border-[#dcdcdc] bg-[#0000ff]"></span>
                        </div>
                        <svg class="pointer-events-none absolute right-px h-1 w-2 fill-[#dcdcdc]"><use href="#caret"/></svg>
                    </div>
                    <div class="flex items-center gap-2 pl-[3px]">
                        <button aria-label="Layer off"><svg class="size-4"><use href="#l-off"/></svg></button>
                        <button aria-label="Isolate"><svg class="size-4"><use href="#l-iso"/></svg></button>
                        <button aria-label="Freeze"><svg class="size-4"><use href="#l-frz"/></svg></button>
                        <button aria-label="Lock"><svg class="size-4"><use href="#l-lock"/></svg></button>
                        <button class="flex items-center gap-[5px]"><svg class="size-4"><use href="#l-cur"/></svg>Make Current</button>
                    </div>
                    <div class="flex items-center gap-2 pl-[3px]">
                        <button aria-label="Turn all layers on"><svg class="size-4"><use href="#l-on"/></svg></button>
                        <button aria-label="Unisolate"><svg class="size-4"><use href="#l-uniso"/></svg></button>
                        <button aria-label="Thaw all"><svg class="size-4"><use href="#l-thaw"/></svg></button>
                        <button aria-label="Unlock"><svg class="size-4"><use href="#l-unlock"/></svg></button>
                        <button class="flex items-center gap-[5px]"><svg class="size-4"><use href="#l-match"/></svg>Match Layer</button>
                    </div>
                </div>
            </div>
            <button class="flex h-[22px] items-center justify-center gap-[6px] pt-[2px]">Layers<svg class="h-1 w-2 fill-[#dcdcdc]"><use href="#caret"/></svg></button>
        </section>

        <section class="flex w-[161px] shrink-0 flex-col border-r border-[#222831] pt-[5px]">
            <div class="flex h-[72px]">
                <button class="flex w-[43px] flex-col items-center gap-[3px] pt-[2px] leading-[15px]"><svg class="size-8 shrink-0"><use href="#insert"/></svg><span>Insert</span><svg class="h-[3px] w-[5px] fill-[#c9cdd3]"><use href="#caret"/></svg></button>
                <div class="grid grid-rows-3 pl-[2px]">
                    <button class="flex items-center gap-[5px]"><svg class="size-4"><use href="#b-create"/></svg>Create</button>
                    <button class="flex items-center gap-[5px]"><svg class="size-4"><use href="#b-edit"/></svg>Edit</button>
                    <button class="flex items-center gap-[5px]"><svg class="size-4"><use href="#b-attr"/></svg>Edit Attributes<svg class="h-[3px] w-[5px] fill-[#c9cdd3]"><use href="#caret"/></svg></button>
                </div>
            </div>
            <button class="flex h-[22px] items-center justify-center gap-[6px] pt-[2px]">Block<svg class="h-1 w-2 fill-[#dcdcdc]"><use href="#caret"/></svg></button>
        </section>

        <section class="flex w-[265px] shrink-0 flex-col border-r border-[#222831] pt-[5px]">
            <div class="flex h-[72px]">
                <button class="flex w-16 flex-col items-center gap-[3px] pt-[3px] leading-[15px]"><svg class="size-8 shrink-0"><use href="#matchprops"/></svg><span>Match<br>Properties</span></button>
                <div class="grid grid-rows-3">
                    <div class="relative flex items-center gap-[2px]">
                        <svg class="size-4"><use href="#wheel"/></svg>
                        <select aria-label="Object color" class="h-[22px] w-[180px] appearance-none border border-[#262d37] bg-[#4c5667] pl-[26px] text-[#e4e6e9]"><option>ByLayer</option></select>
                        <span class="pointer-events-none absolute left-[25px] size-[15px] border border-[#dcdcdc] bg-[#0000ff]"></span>
                        <svg class="pointer-events-none absolute right-[2px] h-1 w-2 fill-[#dcdcdc]"><use href="#caret"/></svg>
                    </div>
                    <div class="relative flex items-center gap-[2px]">
                        <svg class="size-4"><use href="#weights"/></svg>
                        <select aria-label="Lineweight" class="h-[22px] w-[180px] appearance-none border border-[#262d37] bg-[#4c5667] pl-[72px] text-[#e4e6e9]"><option>ByLayer</option></select>
                        <span class="pointer-events-none absolute left-[25px] h-px w-16 bg-[#f0f0f0]"></span>
                        <svg class="pointer-events-none absolute right-[2px] h-1 w-2 fill-[#dcdcdc]"><use href="#caret"/></svg>
                    </div>
                    <div class="relative flex items-center gap-[2px]">
                        <svg class="size-4"><use href="#ltypes"/></svg>
                        <select aria-label="Linetype" class="h-[22px] w-[180px] appearance-none border border-[#262d37] bg-[#4c5667] pl-[72px] text-[#e4e6e9]"><option>ByLayer</option></select>
                        <span class="pointer-events-none absolute left-[25px] h-px w-16 bg-[#f0f0f0]"></span>
                        <svg class="pointer-events-none absolute right-[2px] h-1 w-2 fill-[#dcdcdc]"><use href="#caret"/></svg>
                    </div>
                </div>
            </div>
            <div class="flex h-[22px] items-center justify-end pt-[2px] pr-1">
                <button class="flex flex-1 items-center justify-center gap-[6px]">Properties<svg class="h-1 w-2 fill-[#dcdcdc]"><use href="#caret"/></svg></button>
                <button aria-label="Properties palette"><svg class="size-2"><use href="#launch"/></svg></button>
            </div>
        </section>

        <section class="flex w-[69px] shrink-0 flex-col border-r border-[#222831] pt-[5px]">
            <div class="flex h-[72px]">
                <button class="flex w-[42px] flex-col items-center gap-[3px] pt-[3px] leading-[15px]"><svg class="size-8 shrink-0"><use href="#group"/></svg><span>Group</span></button>
                <div class="grid grid-rows-3">
                    <button aria-label="Ungroup" class="flex w-6 items-center justify-center"><svg class="size-4"><use href="#ungroup"/></svg></button>
                    <button aria-label="Group edit" class="flex w-6 items-center justify-center"><svg class="size-4"><use href="#groupedit"/></svg></button>
                    <button aria-label="Group selection" class="my-px flex w-6 items-center justify-center border border-[#7dc0f5] bg-[#3d5f80]"><svg class="size-4"><use href="#groupsel"/></svg></button>
                </div>
            </div>
            <button class="flex h-[22px] items-center justify-center gap-[5px] pt-[2px] pr-1">Groups<svg class="h-1 w-2 fill-[#dcdcdc]"><use href="#caret"/></svg></button>
        </section>

        <section class="flex w-[97px] shrink-0 flex-col border-r border-[#222831] pt-[5px]">
            <div class="flex h-[72px]">
                <button class="flex w-[72px] flex-col items-center gap-[3px] pt-[3px] leading-[15px]"><svg class="size-8 shrink-0"><use href="#measure"/></svg><span>Measure</span><svg class="h-[3px] w-[5px] fill-[#c9cdd3]"><use href="#caret"/></svg></button>
                <div class="grid grid-rows-3 items-center pl-[2px]">
                    <button aria-label="Quick select"><svg class="size-4"><use href="#quickselect"/></svg></button>
                    <button aria-label="Select all"><svg class="size-4"><use href="#selectall"/></svg></button>
                    <button aria-label="Quick calculator"><svg class="size-4"><use href="#calc"/></svg></button>
                </div>
            </div>
            <button class="flex h-[22px] items-center justify-center gap-[5px] pt-[2px] pr-1">Utilities<svg class="h-1 w-2 fill-[#dcdcdc]"><use href="#caret"/></svg></button>
        </section>

        <section class="flex w-[91px] shrink-0 flex-col border-r border-[#222831] pt-[5px]">
            <div class="flex h-[72px]">
                <button class="flex w-[54px] flex-col items-center gap-[3px] pt-[3px] leading-[15px]"><svg class="size-8 shrink-0"><use href="#paste"/></svg><span>Paste</span><svg class="h-[3px] w-[5px] fill-[#c9cdd3]"><use href="#caret"/></svg></button>
                <div class="grid grid-rows-3 items-center pl-[3px]">
                    <button aria-label="Cut" class="flex items-center gap-[5px]"><svg class="size-4"><use href="#cut"/></svg><svg class="h-[3px] w-[5px] fill-[#c9cdd3]"><use href="#caret"/></svg></button>
                    <button aria-label="Copy clip" class="flex items-center gap-[5px]"><svg class="size-4"><use href="#copyclip"/></svg><svg class="h-[3px] w-[5px] fill-[#c9cdd3]"><use href="#caret"/></svg></button>
                </div>
            </div>
            <div class="flex h-[22px] items-center justify-center pt-[2px]">Clipboard</div>
        </section>

        <section class="flex flex-1 flex-col items-start pt-[5px] pl-[5px]">
            <button class="flex h-[72px] w-[52px] flex-col items-center gap-[3px] pt-[3px] leading-[15px]"><svg class="size-8 shrink-0"><use href="#base"/></svg><span>Base</span><svg class="h-[3px] w-[5px] fill-[#c9cdd3]"><use href="#caret"/></svg></button>
            <div class="flex h-[22px] items-center gap-[6px] pt-[2px]">
                <button class="flex items-center gap-[5px]">View<svg class="h-1 w-2 fill-[#dcdcdc]"><use href="#caret"/></svg></button>
                <button aria-label="View settings"><svg class="size-2"><use href="#launch"/></svg></button>
            </div>
        </section>
    </div>

    <!-- Drawing tabs -->
    <nav class="mt-[3px] flex h-6 shrink-0 items-center pl-[9px]">
        <svg class="h-4 w-2" viewBox="0 0 8 16"><path d="M1 15L7 1" stroke="#565c66"/></svg>
        <button class="w-10 pl-2 text-left">Start</button>
        <div class="flex h-6 w-[90px] items-center gap-[6px] bg-[#3b4453] pl-4 font-bold [clip-path:polygon(10px_0,100%_0,80px_100%,0_100%)]">
            <button>Solidos*</button>
            <button aria-label="Close Solidos"><svg class="size-[9px] opacity-70"><use href="#close"/></svg></button>
        </div>
        <button aria-label="New drawing" class="ml-2"><svg class="size-3"><use href="#plus"/></svg></button>
        <svg class="ml-[10px] h-4 w-2" viewBox="0 0 8 16"><path d="M1 15L7 1" stroke="#565c66"/></svg>
    </nav>

    <!-- Drawing area -->
    <main class="relative min-h-0 flex-1 border-t-4 border-[#3b4453] bg-[#212830]">
        <svg class="absolute inset-0 h-full w-full" viewBox="0 199 1920 808" fill="none">
            <g stroke="#0d0dc4" stroke-width="1.200">
                <path d="M998 441L830 419.500 1038 601z" fill="#0f1157" stroke="none"/>
                <ellipse cx="1018.500" cy="521" rx="239.700" ry="192.700" transform="rotate(-14.500 1018.500 521)"/>
                <ellipse cx="914.200" cy="636.500" rx="239.600" ry="85.600" transform="rotate(74 914.200 636.500)"/>
                <path d="M830 424L726.500 413.500 597 556 791 672.500 1038.500 601.500 1020 762 791 672.500"/>
                <path d="M830 424L998 441" stroke="#0d0d8c"/>
                <path d="M830 419.500L998.500 441 1038.500 601z" stroke="#fff" stroke-width="1" shape-rendering="crispEdges"/>
            </g>
            <!-- UCS icon -->
            <path d="M599 555L632 537" stroke="#468a42" stroke-width="5" stroke-linecap="round"/>
            <path d="M599 554L632 536" stroke="#63a65d" stroke-width="1"/>
            <path d="M598 557L630 576" stroke="#c65f62" stroke-width="5" stroke-linecap="round"/>
            <path d="M598 557L630 576" stroke="#e58a8a" stroke-width="2"/>
            <path d="M597 518v38" stroke="#3a639c" stroke-width="5" stroke-linecap="round"/>
            <path d="M596 519v37" stroke="#5481b8" stroke-width="1"/>
            <circle cx="597" cy="517.500" r="2" fill="#b9d5f0"/>
            <g class="[font-family:Lato,sans-serif]" font-size="18" font-weight="300" text-anchor="middle">
                <text x="601" y="514" fill="#2b6fd6">Z</text>
                <text x="635" y="532" fill="#2ba52b">Y</text>
                <text x="635" y="573" fill="#d83a3a">X</text>
            </g>
            <!-- Crosshair -->
            <g shape-rendering="crispEdges">
                <path d="M1799 741L1893 797M1904 804L1919 813" stroke="#ee8585"/>
                <path d="M1796 858.500L1893 805M1904 798L1919 790" stroke="#85f085"/>
                <path d="M1893.500 795.500h10v10h-10z" stroke="#fff"/>
            </g>
        </svg>

        <div class="relative w-fit pt-[5px] pl-1 leading-4">[−][Custom View][X-Ray]</div>

        <!-- View cube -->
        <div class="absolute top-[39px] right-[14px] flex flex-col items-center">
            <svg class="h-[120px] w-[136px]" viewBox="1770 238 136 120">
                <ellipse cx="1838" cy="307" rx="56.500" ry="36" fill="none" stroke="#434a54" stroke-width="13"/>
                <g class="[font-family:'Liberation_Sans',sans-serif]" font-weight="700" text-anchor="middle" fill="#aeb0b3">
                    <text font-size="16" transform="translate(1797 281) rotate(30) skewX(-20)">W</text>
                    <text font-size="16" transform="translate(1880 282) rotate(-30) skewX(20)">N</text>
                    <text font-size="20" transform="translate(1788 337) rotate(30) skewX(-20)">S</text>
                    <text font-size="20" transform="translate(1886 338) rotate(-30) skewX(20)">E</text>
                </g>
                <path d="M1838 242l36 18.500-36 19.500-35.500-20z" fill="#b6b7b9"/>
                <path d="M1802.500 260l35.500 20v40.500l-32.500-21z" fill="#acadaf"/>
                <path d="M1874 260.500l-36 19.500v40.500l32.500-21z" fill="#9fa0a2"/>
                <path d="M1838 273l7 3.500v6.500l-7 4-6-4v-6.500z" fill="#999a9d"/>
                <path d="M1803 260l35 20 35.500-19.500M1838 280v40" fill="none" stroke="#55585e" stroke-dasharray="8 2"/>
                <g class="[font-family:'Liberation_Sans',sans-serif]" font-size="9" font-weight="700" text-anchor="middle" fill="#46494e">
                    <text transform="translate(1837 262) rotate(28) skewX(-20)">TOP</text>
                    <text transform="translate(1821 293) skewY(28)" font-size="8">FRONT</text>
                    <text transform="translate(1855 293) skewY(-28)" font-size="8">RIGHT</text>
                </g>
            </svg>
            <button class="mt-2 flex h-[18px] w-12 items-center justify-center gap-[6px] rounded border border-[#83879a] bg-[#9b9ead] text-[11px] text-[#555966] [font-family:'Liberation_Sans',sans-serif]">WCS<svg class="h-[5px] w-2" viewBox="0 0 8 5"><path d="M.5.500h7L4 4z" fill="none" stroke="#c9cbd6"/></svg></button>
        </div>

        <!-- Navigation bar -->
        <div class="absolute top-[210px] right-[2px] flex h-[214px] w-[34px] flex-col items-center rounded border border-[#181c22] bg-[#5d636d] py-px text-[#3f454e]">
            <button aria-label="Close navigation bar" class="mr-1 self-end"><svg class="size-2" viewBox="0 0 8 8"><circle cx="4" cy="4" r="4" fill="#41474f"/><path d="M2.500 2.500l3 3M5.500 2.500l-3 3" stroke="#6d737c"/></svg></button>
            <button aria-label="Steering wheel" class="mt-[10px] flex flex-col items-center gap-1">
                <svg class="h-6 w-6" viewBox="0 0 24 24" fill="none" stroke="currentColor"><path d="M19 11V1.500H10A9 9 0 1 0 9.500 20"/><circle cx="10" cy="10" r="4"/><path d="M5 15l2.500-2.500M12.500 12.500L15 15M19 11h-3"/><text x="12" y="23" font-size="10" font-weight="700" fill="#3b5168" stroke="none" class="[font-family:'Liberation_Sans',sans-serif]">2D</text></svg>
                <svg class="h-[3px] w-[5px] fill-current"><use href="#caret"/></svg>
            </button>
            <button aria-label="Pan" class="mt-[5px] w-[26px] border-t border-[#6a707a] pt-1"><svg class="size-6" viewBox="0 0 24 24" fill="none" stroke="currentColor" stroke-width="1.300"><path d="M9 23c-3-3-6-7-8.500-10 1-1.500 3-.5 6 2L4.500 5c1-1.500 2.500-1 3 .5L10 12 9.500 2c.5-1.500 2.500-1.500 3 0L13 12l2-9.500c1-1.200 2.500-.5 2.500 1L16.500 13l3.500-7c1.200-.8 2.500 0 2 1.500L19.500 18 17 23z"/></svg></button>
            <button aria-label="Zoom extents" class="mt-1 flex flex-col items-center gap-[6px]">
                <svg class="size-6" viewBox="0 0 24 24" fill="none" stroke="currentColor" stroke-width="1.300"><path d="M1 1l14 14M15 1L1 15"/><path d="M0 0h5L0 5zM16 0h-5l5 5zM0 16v-5l5 5z" fill="currentColor" stroke="none"/><circle cx="16" cy="15" r="5" fill="#5d636d"/><path d="M19.500 19l4 4" stroke-width="3"/></svg>
                <svg class="h-[3px] w-[5px] fill-current"><use href="#caret"/></svg>
            </button>
            <button aria-label="Orbit" class="mt-[5px] flex flex-col items-center gap-[6px]">
                <svg class="size-6" viewBox="0 0 24 24" fill="none" stroke="currentColor" stroke-width="1.300"><ellipse cx="12" cy="14" rx="11" ry="4.500"/><path d="M10 23V6H7.500L12 .500 16.500 6H14v17z" fill="#5d636d"/><path d="M3 17l6-4v7z" fill="currentColor"/></svg>
                <svg class="h-[3px] w-[5px] fill-current"><use href="#caret"/></svg>
            </button>
            <button aria-label="ShowMotion" class="mt-1 w-[26px] border-t border-[#6a707a] pt-[3px]"><svg class="size-6" viewBox="0 0 24 24" fill="none" stroke="currentColor" stroke-width="1.200"><path d="M1 1h6v6H1zM9 1h6v6H9zM17 1h6v6h-6zM1 10h16v13H1z"/><path d="M6 13l7 3.500L6 20z" fill="currentColor"/></svg></button>
            <button aria-label="Customize navigation bar" class="mt-auto mr-1 self-end"><svg class="size-2" viewBox="0 0 8 8"><circle cx="4" cy="4" r="3.500" fill="none" stroke="#41474f"/><path d="M2 4h4" stroke="#41474f"/></svg></button>
        </div>

        <!-- Command window -->
        <div class="absolute right-[413px] bottom-px left-[412px] flex h-[62px] bg-[#272d38]">
            <div class="flex w-[25px] flex-col items-center pr-px">
                <svg class="mt-[5px] h-[6px] w-[18px]" viewBox="0 0 18 6"><path d="M0 1h18M0 4h18" stroke="#c2c4c8" stroke-width="2" stroke-dasharray="2 1"/></svg>
                <button aria-label="Close command line" class="mt-2"><svg class="size-[10px]" viewBox="0 0 12 12"><path d="M1 1l10 10M11 1L1 11" stroke="#b8bbc0" stroke-width="2.500"/></svg></button>
                <button aria-label="Customize command line" class="mt-[10px]"><svg class="size-4" viewBox="0 0 16 16"><path d="M1.500 14.500L9 7" stroke="#b8bbc0" stroke-width="3"/><path d="M13 0l-2.500 2.500.5 2.500 2.500.5L16 3c.5 3-1.500 6-5 5.500L8 7.500C7 4 9 0 13 0z" fill="#b8bbc0"/></svg></button>
            </div>
            <div class="flex flex-1 flex-col gap-px pt-px text-[#111] [font-family:'DejaVu_Sans_Mono',monospace]">
                <div class="flex flex-1 flex-col justify-end bg-[#98999b] pb-px pl-[2px] text-[11px] leading-[15px]">
                    <p>1 loop extracted.</p>
                    <p>1 Region created.</p>
                </div>
                <div class="flex h-5 items-center bg-[#bdbec0] pr-1 pl-1">
                    <button aria-label="Recent commands" class="flex items-center gap-[3px]"><svg class="h-3 w-4" viewBox="0 0 16 12"><path d="M.7.700h14.600v10.600H.7z" fill="none" stroke="#4a4d52" stroke-width="1.400"/><path d="M0 0h16v3H0z" fill="#4a4d52"/><path d="M2.500 4.500L5 6.500l-2.500 2M6 9h4" fill="none" stroke="#4a4d52"/></svg><svg class="h-1 w-2 fill-[#55585e]"><use href="#caret"/></svg></button>
                    <input type="text" aria-label="Command" placeholder="Type a command" class="ml-[5px] flex-1 text-[11px] italic placeholder:text-[#66696e]">
                    <button aria-label="Command history"><svg class="h-1 w-2 rotate-180 fill-[#55585e]"><use href="#caret"/></svg></button>
                </div>
            </div>
        </div>
    </main>

    <!-- Status bar -->
    <footer class="flex h-[29px] shrink-0 justify-between border-t-4 border-[#3b4453]">
        <nav class="flex h-6 items-center pl-2">
            <button class="h-6 w-[70px] bg-[#3b4453] pt-px font-bold [clip-path:polygon(10px_0,100%_0,60px_100%,0_100%)]">Model</button>
            <button class="w-7 pt-px pl-[7px] text-left">a3</button>
            <svg class="h-4 w-2" viewBox="0 0 8 16"><path d="M1 15L7 1" stroke="#565c66"/></svg>
            <button aria-label="New layout" class="ml-[9px]"><svg class="size-3"><use href="#plus"/></svg></button>
            <svg class="ml-[10px] h-4 w-2" viewBox="0 0 8 16"><path d="M1 15L7 1" stroke="#565c66"/></svg>
        </nav>
        <div class="flex items-stretch gap-[3px] pt-[2px] pr-px">
            <button class="w-[47px] bg-[#3b4453]">MODEL</button>
            <div class="flex w-16 items-center bg-[#3b4453]">
                <button aria-label="Grid" class="flex w-6 justify-center"><svg class="size-4" viewBox="0 0 16 16"><path d="M4.500 0v16M8.500 0v16M12.500 0v16M0 4.500h16M0 8.500h16M0 12.500h16" stroke="#dcdcdc"/></svg></button>
                <button aria-label="Snap" class="flex w-6 justify-center"><svg class="size-4" viewBox="0 0 16 16"><path d="M1 2.500h15M1 7.500h15M1 12.500h15" stroke="#dcdcdc" stroke-width="2" stroke-dasharray="2 4"/></svg></button>
                <button aria-label="Snap menu" class="ml-1"><svg class="h-1 w-2 fill-[#dcdcdc]"><use href="#caret"/></svg></button>
            </div>
            <div class="flex w-[168px] items-center bg-[#3b4453]">
                <button aria-label="Ortho" class="flex h-[23px] w-[22px] items-center justify-center bg-[#5b8fc4]"><svg class="size-4" viewBox="0 0 16 16"><path d="M1.500 0v14.500H16M1.500 9.500h5v5" fill="none" stroke="#fff" stroke-width="1.300"/></svg></button>
                <button aria-label="Polar" class="ml-[5px]"><svg class="size-4" viewBox="0 0 16 16"><circle cx="7.500" cy="8.500" r="6" fill="none" stroke="#dcdcdc"/><path d="M7.500 8.500L14 1M7.500 8.500H16" stroke="#dcdcdc"/><circle cx="7.500" cy="8.500" r="1.500" fill="#dcdcdc"/></svg></button>
                <button aria-label="Polar menu" class="ml-2"><svg class="h-1 w-2 fill-[#dcdcdc]"><use href="#caret"/></svg></button>
                <button aria-label="Isodraft" class="ml-2"><svg class="size-4" viewBox="0 0 16 16"><path d="M8.500 0v16" stroke="#5bbf7b"/><path d="M1 1l14 14" stroke="#e07575"/><circle cx="8.500" cy="8.500" r="1.500" fill="#fff"/></svg></button>
                <button aria-label="Isodraft menu" class="ml-2"><svg class="h-1 w-2 fill-[#dcdcdc]"><use href="#caret"/></svg></button>
                <button aria-label="Snap tracking" class="ml-[9px]"><svg class="size-4" viewBox="0 0 16 16"><path d="M15 1L2 13.500h14" fill="none" stroke="#dcdcdc" stroke-width="1.200"/><circle cx="8" cy="8" r="1.700" fill="#dcdcdc"/></svg></button>
                <button aria-label="Object snap" class="ml-[5px] flex h-[23px] w-[22px] items-center justify-center bg-[#5b8fc4]"><svg class="size-4" viewBox="0 0 16 16"><path d="M6 3.500h9.500v12h-12V7" fill="none" stroke="#fff" stroke-width="1.200"/><path d="M.5 1.500h4v4h-4z" fill="none" stroke="#fff"/></svg></button>
                <button aria-label="Object snap menu" class="ml-[5px]"><svg class="h-1 w-2 fill-[#dcdcdc]"><use href="#caret"/></svg></button>
            </div>
            <button aria-label="Transparency" class="flex w-6 items-center justify-center bg-[#3b4453]"><svg class="size-4" viewBox="0 0 16 16"><path d="M.7.700h14.600v14.600H.7z" fill="none" stroke="#dcdcdc" stroke-width="1.400"/><path d="M3 3h2v2H3zM7 3h2v2H7zM11 3h2v2h-2zM5 5h2v2H5zM9 5h2v2H9zM3 7h2v2H3zM7 7h2v2H7zM11 7h2v2h-2zM5 9h2v2H5zM9 9h2v2H9zM3 11h2v2H3zM7 11h2v2H7zM11 11h2v2h-2z" fill="#dcdcdc"/></svg></button>
            <div class="flex w-[106px] items-center gap-2 bg-[#3b4453] pl-1">
                <button aria-label="Annotation visibility"><svg class="h-5 w-4" viewBox="0 0 16 20"><path d="M7 3l3 8 4 7-5-2-1-2H6l-1 2-5 2 4-7z" fill="#dcdcdc"/><circle cx="12.500" cy="5" r="2.500" fill="none" stroke="#dcdcdc"/></svg></button>
                <button aria-label="Auto scale"><svg class="h-5 w-4" viewBox="0 0 16 20"><path d="M7 3l3 8 4 7-5-2-1-2H6l-1 2-5 2 4-7z" fill="#dcdcdc"/><path d="M14 0l-4 5h2.500L11 9l5-5h-2.500L15 0z" fill="#dcdcdc"/></svg></button>
                <button aria-label="Annotation objects"><svg class="h-5 w-4"><use href="#north"/></svg></button>
                <button class="flex items-center gap-[2px]">1:1<svg class="h-1 w-2 fill-[#dcdcdc]"><use href="#caret"/></svg></button>
            </div>
            <button aria-label="Workspace" class="flex w-[38px] items-center justify-center gap-2 bg-[#3b4453]"><svg class="size-4" viewBox="0 0 16 16"><circle cx="8" cy="8" r="4.300" fill="none" stroke="#dcdcdc" stroke-width="3.400"/><circle cx="8" cy="8" r="6.700" fill="none" stroke="#dcdcdc" stroke-width="2.600" stroke-dasharray="2.600 2.660"/></svg><svg class="h-1 w-2 fill-[#dcdcdc]"><use href="#caret"/></svg></button>
            <button aria-label="Annotation monitor" class="flex w-6 items-center justify-center bg-[#3b4453]"><svg class="size-4" viewBox="0 0 12 12"><use href="#plus"/></svg></button>
            <button aria-label="Isolate objects" class="flex w-6 items-center justify-center bg-[#3b4453]"><svg class="size-4" viewBox="0 0 16 16"><path d="M.5.500h6v6h-6zM7.500 10l3 5.500h-6z" fill="none" stroke="#dcdcdc" stroke-width="1.200"/><circle cx="12.500" cy="6.500" r="3" fill="none" stroke="#dcdcdc" stroke-width="1.200"/></svg></button>
            <button aria-label="Graphics performance" class="flex w-[22px] items-center justify-center bg-[#3b4453]"><svg class="size-4" viewBox="0 0 16 16"><circle cx="9" cy="6" r="6" fill="#2f6fb5"/><path d="M0 3.500h8M4 0v7" stroke="#dcdcdc"/><path d="M0 8h6v6H0z" fill="#f0b429"/><path d="M6 11l3 3.500L15 8" fill="none" stroke="#41b54a" stroke-width="2.500"/></svg></button>
            <div class="flex w-12 items-center bg-[#3b4453]">
                <button aria-label="Clean screen" class="flex w-6 justify-center"><svg class="size-4" viewBox="0 0 16 16"><path d="M.7 2.700h14.600v10.600H.7z" fill="none" stroke="#dcdcdc" stroke-width="1.300"/><path d="M9 8l3-3M7 8l-3 3" stroke="#dcdcdc"/><path d="M9.500 4.500H13V8zM3 8v3.500h3.500z" fill="#dcdcdc"/></svg></button>
                <button aria-label="Customization" class="flex w-6 justify-center"><svg class="size-4" viewBox="0 0 16 16"><path d="M0 2h16M0 8h16M0 14h16" stroke="#dcdcdc" stroke-width="2"/></svg></button>
            </div>
        </div>
    </footer>
</body>
</html>
